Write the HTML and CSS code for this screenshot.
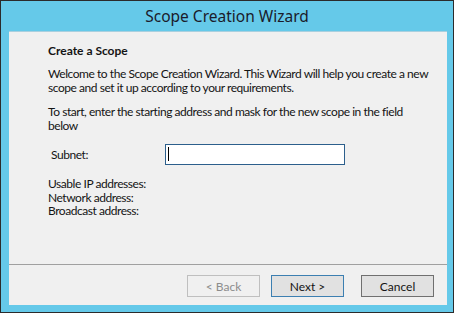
FILE: index.html
```html
<!DOCTYPE html>
<html lang="en">
<head>
  <meta charset="UTF-8">
  <meta name="viewport" content="width=device-width, initial-scale=1.0">
  <title>Scope Creation Wizard</title>
  <link rel="stylesheet" href="styles.css">
</head>
<body>
  <div class="window">
    <div class="titlebar">Scope Creation Wizard</div>

    <div class="content">
      <div class="page">
        <h1>Create a Scope</h1>
        <p>Welcome to the Scope Creation Wizard. This Wizard will help you create a new scope and set it up according to your requirements.</p>
        <p>To start, enter the starting address and mask for the new scope in the field below</p>

        <div class="subnet-row">
          <label for="subnet">Subnet:</label>
          <div class="field" id="subnet"><span class="caret"></span></div>
        </div>

        <div class="info">
          <div>Usable IP addresses:</div>
          <div>Network address:</div>
          <div>Broadcast address:</div>
        </div>
      </div>

      <div class="footer">
        <button type="button" class="btn" disabled>&lt; Back</button>
        <button type="button" class="btn btn-default">Next &gt;</button>
        <button type="button" class="btn btn-cancel">Cancel</button>
      </div>
    </div>
  </div>
</body>
</html>
```

FILE: styles.css
```css
body {
  margin: 0;
  background: #ffffff;
  font-family: Lato, "Noto Sans", sans-serif;
  font-size: 12px;
  color: #141414;
}
.window {
  box-sizing: border-box;
  width: 454px;
  height: 313px;
  border: 1px solid #2b2b2b;
  background-color: #65c9e9;
  padding: 0 6px 7px 8px;
  display: flex;
  flex-direction: column;
}
.titlebar {
  height: 30px;
  line-height: 30px;
  text-align: center;
  font-family: "Noto Sans", sans-serif;
  font-size: 15.5px;
  color: #1b1b2b;
  padding-right: 2px;
}
.content {
  flex: 1;
  background-color: #f0f0f0;
  border-top: 1px solid #a9d0df;
  display: flex;
  flex-direction: column;
}
.page {
  padding: 12px 20px 0 39px;
  line-height: 14px;
  letter-spacing: -0.45px;
}
.page h1 {
  margin: 0;
  font-size: 12px;
  font-weight: bold;
  letter-spacing: 0;
}
.page p {
  margin: 9px 0 0;
  width: 384px;
}
.page p + p {
  margin-top: 10px;
}
.subnet-row {
  display: flex;
  align-items: center;
  margin-top: 11px;
}
.subnet-row label {
  width: 114px;
  padding-left: 3px;
}
.field {
  box-sizing: border-box;
  width: 180px;
  height: 21px;
  border: 1px solid #2c5f8c;
  background: #ffffff;
  padding: 2px 0 0 2px;
}
.caret {
  display: block;
  width: 1px;
  height: 14px;
  background: #000000;
}
.info {
  margin-top: 12px;
  line-height: 13.5px;
}
.footer {
  margin-top: auto;
  border-top: 1px solid #a0a0a0;
  padding: 10px 13px 8px 0;
  display: flex;
  justify-content: flex-end;
  gap: 11px;
}
.btn {
  box-sizing: border-box;
  width: 73px;
  height: 22px;
  padding: 0;
  font-family: inherit;
  font-size: 12px;
  color: #141414;
  background-color: #e1e1e1;
  border: 1px solid #707070;
}
.btn:disabled {
  background-color: #f0f0f0;
  border-color: #bfbfbf;
  color: #8c8c8c;
}
.btn-default {
  border-color: #3c7fb1;
}
.btn-cancel {
  margin-left: 6px;
}
```
